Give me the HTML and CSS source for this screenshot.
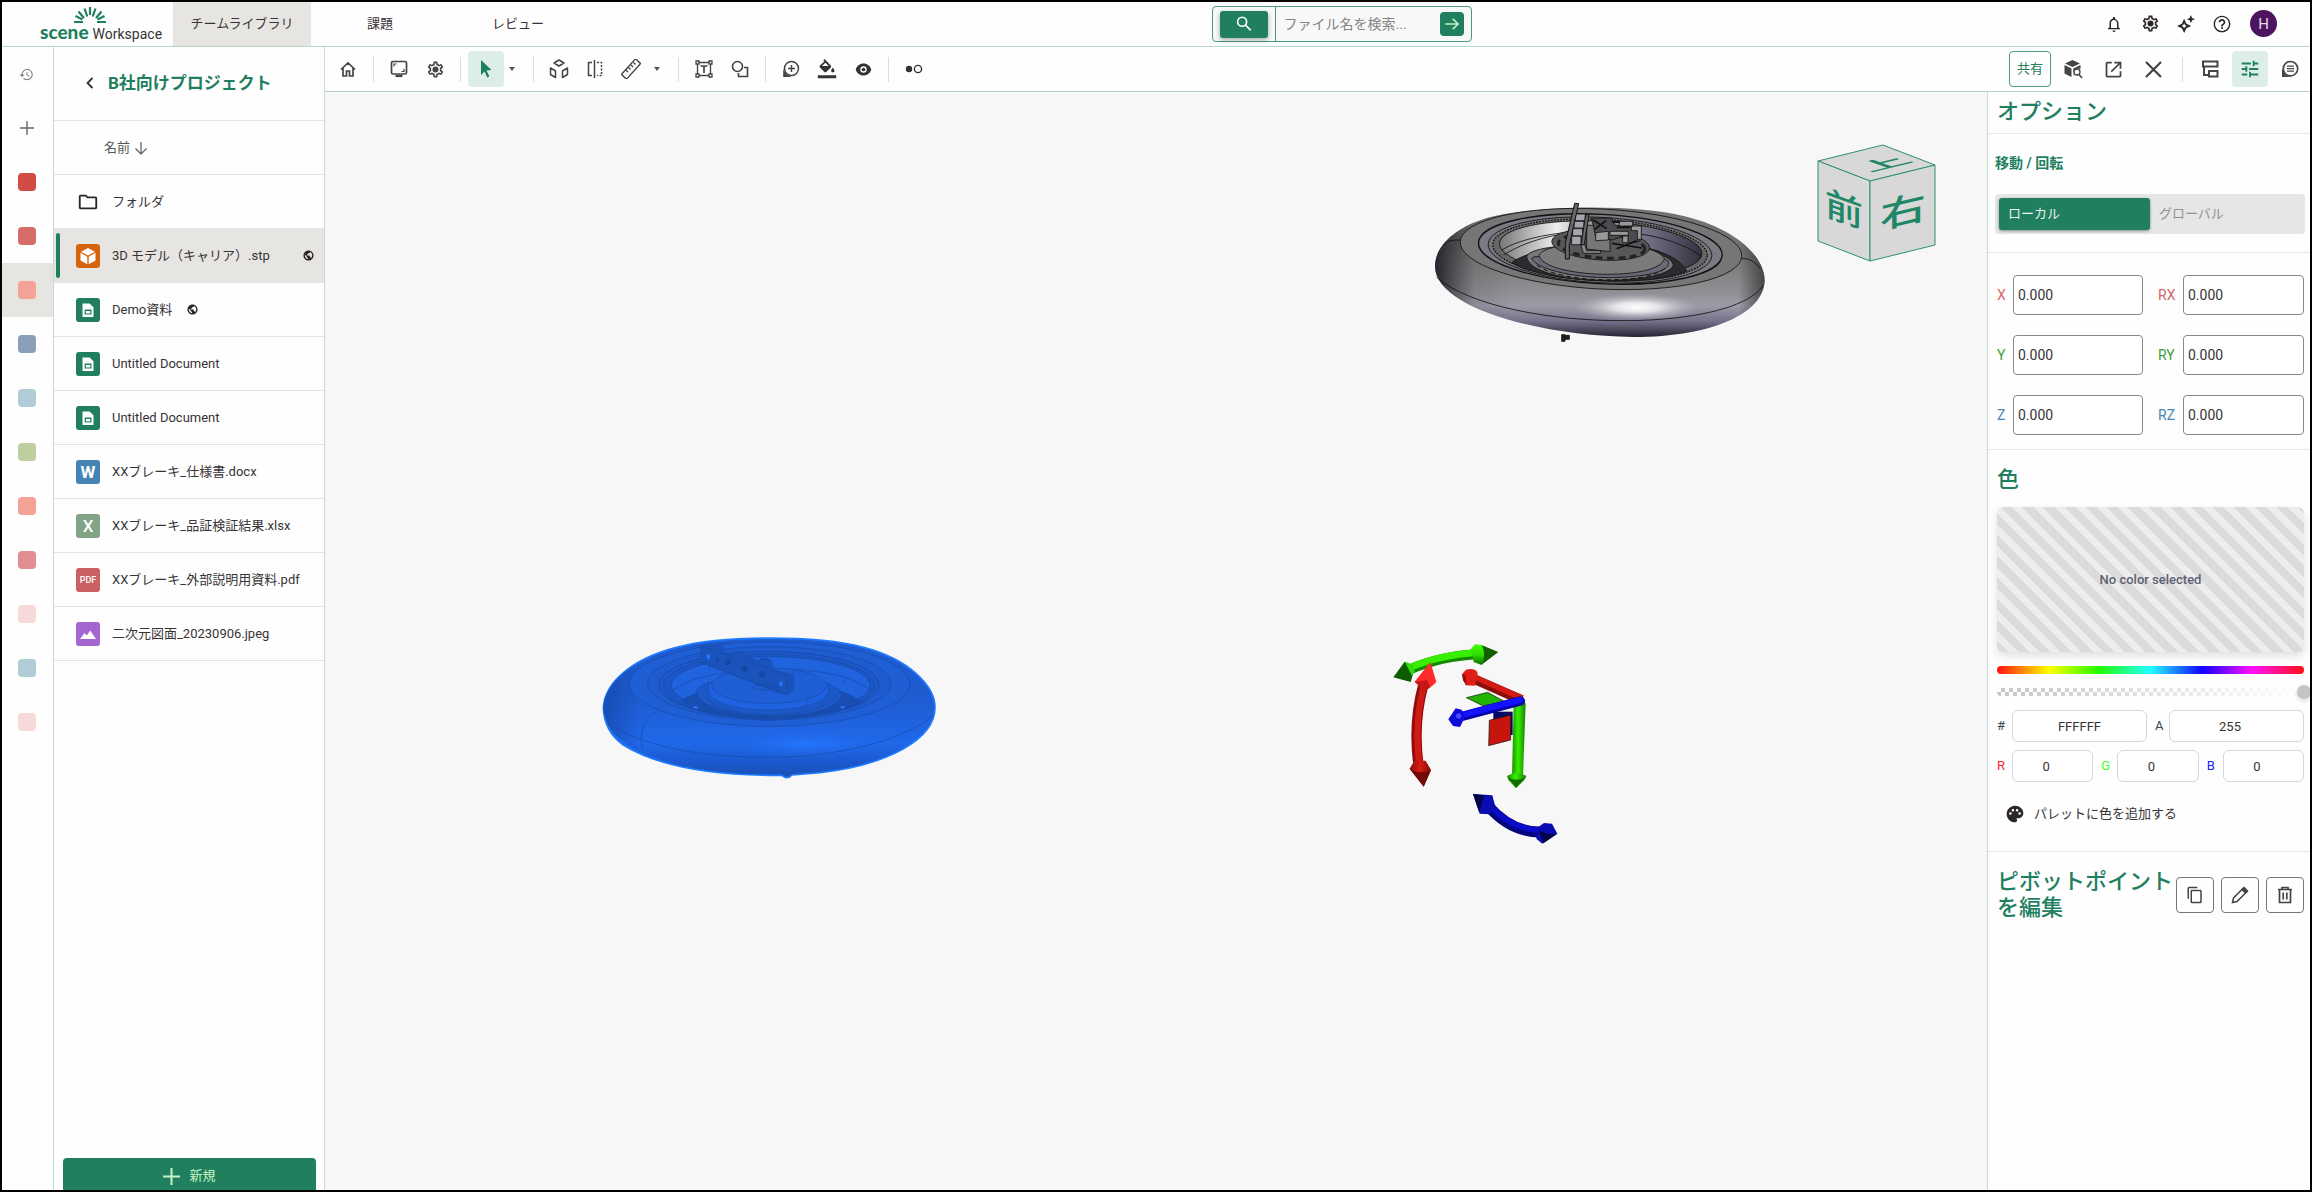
FILE: index.html
```html
<!DOCTYPE html>
<html lang="ja">
<head>
<meta charset="utf-8">
<meta name="viewport" content="width=device-width, initial-scale=1">
<title>scene Workspace</title>
<link rel="stylesheet" href="styles.css">
</head>
<body>
<svg class="defs" aria-hidden="true">
  <symbol id="i-gear" viewBox="0 0 24 24"><path d="M19.43 12.98c.04-.32.07-.64.07-.98s-.03-.66-.07-.98l2.11-1.65c.19-.15.24-.42.12-.64l-2-3.46c-.09-.16-.26-.25-.44-.25-.06 0-.12.01-.17.03l-2.49 1c-.52-.4-1.08-.73-1.69-.98l-.38-2.65C14.46 2.18 14.25 2 14 2h-4c-.25 0-.46.18-.49.42l-.38 2.65c-.61.25-1.17.59-1.69.98l-2.49-1c-.06-.02-.12-.03-.18-.03-.17 0-.34.09-.43.25l-2 3.46c-.13.22-.07.49.12.64l2.11 1.65c-.04.32-.07.65-.07.98s.03.66.07.98l-2.11 1.65c-.19.15-.24.42-.12.64l2 3.46c.09.16.26.25.44.25.06 0 .12-.01.17-.03l2.49-1c.52.4 1.08.73 1.69.98l.38 2.65c.03.24.24.42.49.42h4c.25 0 .46-.18.49-.42l.38-2.65c.61-.25 1.17-.59 1.69-.98l2.49 1c.06.02.12.03.18.03.17 0 .34-.09.43-.25l2-3.46c.12-.22.07-.49-.12-.64l-2.11-1.65zm-1.98-1.71c.04.31.05.52.05.73 0 .21-.02.43-.05.73l-.14 1.13.89.7 1.08.84-.7 1.21-1.27-.51-1.04-.42-.9.68c-.43.32-.84.56-1.25.73l-1.06.43-.16 1.13-.2 1.35h-1.4l-.19-1.35-.16-1.13-1.06-.43c-.43-.18-.83-.41-1.23-.71l-.91-.7-1.06.43-1.27.51-.7-1.21 1.08-.84.89-.7-.14-1.13c-.03-.31-.05-.54-.05-.74s.02-.43.05-.73l.14-1.13-.89-.7-1.08-.84.7-1.21 1.27.51 1.04.42.9-.68c.43-.32.84-.56 1.25-.73l1.06-.43.16-1.13.2-1.35h1.39l.19 1.35.16 1.13 1.06.43c.43.18.83.41 1.23.71l.91.7 1.06-.43 1.27-.51.7 1.21-1.07.85-.89.7.14 1.13z"/><circle cx="12" cy="12" r="3.8"/></symbol>
  <symbol id="i-globe" viewBox="0 0 24 24"><path d="M12 1C5.9 1 1 5.9 1 12s4.900 11 11 11 11-4.900 11-11S18.100 1 12 1zm-1 18.930c-3.950-.49-7-3.850-7-7.930 0-.62.080-1.210.210-1.790L9 15v1c0 1.100.9 2 2 2v1.930zm6.900-2.540c-.26-.81-1-1.390-1.900-1.390h-1v-3c0-.55-.45-1-1-1H8v-2h2c.55 0 1-.45 1-1V7h2c1.100 0 2-.9 2-2v-.41c2.930 1.190 5 4.060 5 7.410 0 2.080-.8 3.970-2.100 5.390z"/></symbol>
  <symbol id="i-sheet" viewBox="0 0 24 24"><path fill="#fff" d="M6.500 5.500h7L17.500 9.200V19h-11z"/><path fill="none" stroke="#1f7f5f" stroke-width="1.200" d="M9.300 12h5.600v4H9.300zM8.700 12.300h6.800"/></symbol>
</svg>

<header class="header">
  <a class="logo" href="#">
    <svg class="logo-sun" viewBox="0 0 32 18" aria-hidden="true"><g stroke="#1f7f5f" stroke-width="2.200" fill="none"><path d="M16 1v8M10.500 2.500l2.800 8M21.500 2.500l-2.800 8M4.500 5.500l5.500 6.500M27.500 5.500L22 12M0 16h9M23 16h9M1.500 10l7 3.500M30.500 10l-7 3.500"/></g></svg>
    <span class="logo-line"><b>scene</b><span>Workspace</span></span>
  </a>
  <nav class="tabs">
    <a class="tab tab-on" href="#">チームライブラリ</a>
    <a class="tab" href="#">課題</a>
    <a class="tab" href="#">レビュー</a>
  </nav>
  <form class="search-wrap">
    <div class="search">
      <div class="search-kind"><button type="button" aria-label="検索"><svg width="18" height="18" viewBox="0 0 24 24" fill="none" stroke="#fff" stroke-width="2.200"><circle cx="9.500" cy="9" r="6"/><path d="M14 13.500l7 7"/></svg></button></div>
      <input type="text" placeholder="ファイル名を検索..." aria-label="ファイル名を検索">
      <button class="search-go" type="button" aria-label="実行"><svg width="18" height="18" viewBox="0 0 24 24" fill="none" stroke="#c6f3c0" stroke-width="2.200"><path d="M3 12h17M13 5l7 7-7 7"/></svg></button>
    </div>
  </form>
  <div class="account">
    <button class="ib" type="button" aria-label="通知"><svg width="18" height="18" viewBox="0 0 24 24" fill="#2b2529"><path d="M12 22.500c1.100 0 2-.9 2-2h-4c0 1.100.9 2 2 2zm6-6v-5c0-3.070-1.630-5.640-4.500-6.320V4c0-.83-.67-1.500-1.500-1.500s-1.500.67-1.500 1.500v.68C7.640 5.360 6 7.920 6 11v5.500l-2 1V19h16v-1.500zM16 17.300H8v-6.300c0-2.480 1.510-4.500 4-4.500s4 2.020 4 4.500z"/></svg></button>
    <button class="ib" type="button" aria-label="設定"><svg width="19" height="19" fill="#2b2529"><use href="#i-gear"/></svg></button>
    <button class="ib" type="button" aria-label="AI"><svg width="18" height="18" viewBox="0 0 24 24" fill="#2b2529"><path fill-rule="evenodd" d="M9.500 5l3 6.500 6.500 3-6.500 3-3 6.500-3-6.500-6.500-3 6.500-3zm0 6l-1.200 2.300-2.300 1.200 2.300 1.200 1.200 2.300 1.200-2.300 2.300-1.200-2.300-1.200zM18.500 0l1.600 3.900L24 5.500l-3.900 1.600L18.500 11l-1.600-3.900L13 5.500l3.900-1.600z"/></svg></button>
    <button class="ib" type="button" aria-label="ヘルプ"><svg width="20" height="20" viewBox="0 0 24 24" fill="#2b2529"><path d="M11 18h2v-2h-2v2zm1-16C6.480 2 2 6.480 2 12s4.480 10 10 10 10-4.480 10-10S17.520 2 12 2zm0 18.300c-4.600 0-8.300-3.700-8.300-8.300s3.700-8.300 8.300-8.300 8.300 3.700 8.300 8.300-3.700 8.300-8.300 8.300zM12 6c-2.210 0-4 1.790-4 4h2c0-1.100.9-2 2-2s2 .9 2 2c0 2-3 1.750-3 5h2c0-2.250 3-2.500 3-5 0-2.210-1.790-4-4-4z"/></svg></button>
    <button class="avatar" type="button">H</button>
  </div>
</header>

<div class="body">
  <nav class="rail" aria-label="プロジェクト">
    <button type="button" aria-label="履歴"><svg width="15" height="15" viewBox="0 0 24 24" fill="#7c7c7c"><path d="M13 3c-4.970 0-9 4.030-9 9H1l3.900 3.900L9 12H5.700c0-4 3.300-7.300 7.300-7.300s7.300 3.300 7.300 7.300-3.300 7.300-7.300 7.300c-2 0-3.800-.8-5.100-2.100l-1.200 1.200C8.270 19.990 10.510 21 13 21c4.970 0 9-4.030 9-9s-4.030-9-9-9zm-1 5v5l4.280 2.540.72-1.210-3.500-2.080V8z"/></svg></button>
    <button type="button" aria-label="追加"><svg width="14" height="14" viewBox="0 0 14 14" stroke="#666" stroke-width="1.400"><path d="M7 0v14M0 7h14"/></svg></button>
    <button type="button" aria-label="プロジェクト 1"><i class="sw red"></i></button>
    <button type="button" aria-label="プロジェクト 2"><i class="sw brick"></i></button>
    <button class="rail-on" type="button" aria-label="プロジェクト 3"><i class="sw salmon"></i></button>
    <button type="button" aria-label="プロジェクト 4"><i class="sw slate"></i></button>
    <button type="button" aria-label="プロジェクト 5"><i class="sw sky"></i></button>
    <button type="button" aria-label="プロジェクト 6"><i class="sw olive"></i></button>
    <button type="button" aria-label="プロジェクト 7"><i class="sw salmon"></i></button>
    <button type="button" aria-label="プロジェクト 8"><i class="sw rose"></i></button>
    <button type="button" aria-label="プロジェクト 9"><i class="sw blush"></i></button>
    <button type="button" aria-label="プロジェクト 10"><i class="sw sky"></i></button>
    <button type="button" aria-label="プロジェクト 11"><i class="sw blush"></i></button>
  </nav>

  <aside class="files">
    <div class="files-head">
      <button type="button" aria-label="戻る"><svg width="8" height="12" viewBox="0 0 8 12" fill="none" stroke="#333" stroke-width="1.800"><path d="M6.500 1L1.500 6l5 5"/></svg></button>
      <h1>B社向けプロジェクト</h1>
    </div>
    <button class="sort" type="button">名前<svg width="14" height="14" viewBox="0 0 14 14" fill="none" stroke="#666" stroke-width="1.300"><path d="M7 1v12M1.500 7.500L7 13l5.500-5.500"/></svg></button>
    <ul>
      <li><a href="#"><span class="tile"><svg width="22" height="22" viewBox="0 0 24 24" fill="#2b2529"><path d="M9.170 6l2 2H20v10H4V6h5.170M10 4H4c-1.100 0-1.990.9-1.990 2L2 18c0 1.100.9 2 2 2h16c1.100 0 2-.9 2-2V8c0-1.100-.9-2-2-2h-8l-2-2z"/></svg></span><span>フォルダ</span></a></li>
      <li class="file-on"><a href="#"><span class="tile t-model"><svg width="18" height="18" viewBox="0 0 18 18" fill="#fff"><path d="M9 1l7 3.700L9 8.600 2 4.700zM1.500 5.800l6.800 3.900v7.500l-6.800-3.700zM16.500 5.800L9.700 9.700v7.500l6.800-3.700z"/></svg></span><span>3D モデル（キャリア）.stp</span><svg class="globe end"><use href="#i-globe"/></svg></a></li>
      <li><a href="#"><span class="tile t-sheet"><svg width="24" height="24"><use href="#i-sheet"/></svg></span><span>Demo資料</span><svg class="globe"><use href="#i-globe"/></svg></a></li>
      <li><a href="#"><span class="tile t-sheet"><svg width="24" height="24"><use href="#i-sheet"/></svg></span><span>Untitled Document</span></a></li>
      <li><a href="#"><span class="tile t-sheet"><svg width="24" height="24"><use href="#i-sheet"/></svg></span><span>Untitled Document</span></a></li>
      <li><a href="#"><span class="tile t-word">W</span><span>XXブレーキ_仕様書.docx</span></a></li>
      <li><a href="#"><span class="tile t-excel">X</span><span>XXブレーキ_品証検証結果.xlsx</span></a></li>
      <li><a href="#"><span class="tile t-pdf">PDF</span><span>XXブレーキ_外部説明用資料.pdf</span></a></li>
      <li><a href="#"><span class="tile t-image"><svg width="24" height="24" viewBox="0 0 24 24" fill="#fff"><path d="M4 17l4.500-6 2.300 2.500L14.200 8.500 20 17z"/></svg></span><span>二次元図面_20230906.jpeg</span></a></li>
    </ul>
    <button class="new" type="button"><svg width="17" height="17" viewBox="0 0 17 17" stroke="#c6f3c0" stroke-width="2"><path d="M8.500 0v17M0 8.500h17"/></svg>新規</button>
  </aside>

  <div class="work">
    <div class="toolbar">
      <div class="tools">
        <button class="ib" type="button" aria-label="ホーム"><svg width="18" height="18" viewBox="0 0 18 18" fill="none" stroke="#444" stroke-width="1.700"><path d="M2 9.500L9 3l7 6.500M4 8v8h3.500v-5h3v5H14V8"/></svg></button>
        <i class="sep"></i>
        <button class="ib" type="button" aria-label="画面"><svg width="18" height="18" viewBox="0 0 18 18" fill="none" stroke="#444" stroke-width="1.700"><rect x="1.500" y="1.500" width="15" height="12.500" rx="1.500"/><path d="M4 6.500V4h2.500M14 9v2.500h-2.500" stroke-width="1.200"/><path d="M5.500 16h7" stroke-width="2.200"/></svg></button>
        <button class="ib" type="button" aria-label="表示設定"><svg width="19" height="19" fill="#444"><use href="#i-gear"/></svg></button>
        <i class="sep"></i>
        <button class="ib ib-on" type="button" aria-label="選択"><svg width="18" height="18" viewBox="0 0 18 18" fill="#1f7f5f"><path d="M4 0l10.500 10-5 .4 2.900 6.100-2.200 1-2.700-6L4 15z"/></svg></button>
        <button class="caret" type="button" aria-label="選択メニュー"><svg width="6" height="4" viewBox="0 0 6 4" fill="#555"><path d="M0 0h6L3 4z"/></svg></button>
        <i class="sep"></i>
        <button class="ib" type="button" aria-label="分解"><svg width="20" height="20" viewBox="0 0 20 20" fill="none" stroke="#444" stroke-width="1.500" stroke-linejoin="round"><path d="M10 1l5 3-5 3-5-3zM1.500 9l5 3v6.500l-5-3zM18.500 9l-5 3v6.500l5-3z"/></svg></button>
        <button class="ib" type="button" aria-label="断面"><svg width="18" height="18" viewBox="0 0 18 18" fill="none" stroke="#444" stroke-width="1.500"><path d="M6 2.500H2.500v13H6M8.500 0v18"/><path stroke-dasharray="2 1.500" d="M11 2.500h4.500v13H11"/></svg></button>
        <button class="ib" type="button" aria-label="計測"><svg width="20" height="20" viewBox="0 0 20 20" fill="none" stroke="#444" stroke-width="1.400"><rect x="-.5" y="6.500" width="21" height="7" rx="1" transform="rotate(-48 10 10)"/><path d="M5 11l2 2M7.500 8.500l2 2M10 6l2 2M12.500 3.500l2 2"/></svg></button>
        <button class="caret" type="button" aria-label="計測メニュー"><svg width="6" height="4" viewBox="0 0 6 4" fill="#555"><path d="M0 0h6L3 4z"/></svg></button>
        <i class="sep"></i>
        <button class="ib" type="button" aria-label="テキスト"><svg width="18" height="18" viewBox="0 0 18 18" fill="#fff" stroke="#444" stroke-width="1.300"><path d="M2.500 2.500h13v13h-13z"/><path d="M1 1h3v3H1zM14 1h3v3h-3zM1 14h3v3H1zM14 14h3v3h-3z"/><path d="M5.500 6h7M9 6v7" stroke-width="1.700"/></svg></button>
        <button class="ib" type="button" aria-label="図形"><svg width="18" height="18" viewBox="0 0 18 18" fill="none" stroke="#444" stroke-width="1.600"><circle cx="6.500" cy="6.500" r="5"/><path d="M13 7.500h3.500v9h-9V13"/></svg></button>
        <i class="sep"></i>
        <button class="ib" type="button" aria-label="コメント追加"><svg width="18" height="18" viewBox="0 0 18 18" fill="none" stroke="#444" stroke-width="1.500"><circle cx="9.500" cy="8.500" r="7"/><path d="M9.500 5v7M6 8.500h7"/><path fill="#444" stroke="none" d="M1.200 9l3.300 5.500 5 2.500H1.200z"/></svg></button>
        <button class="ib" type="button" aria-label="塗りつぶし"><svg width="20" height="22" viewBox="0 0 24 26" fill="#333"><path d="M16.560 8.940L9 1 7.500 2.400l1.400 1.500-5.460 5.040c-.59.59-.59 1.540 0 2.120l5.500 5.500c.29.29.68.44 1.060.44s.77-.15 1.060-.44l5.500-5.500c.59-.58.59-1.530 0-2.120zM6 9.500L10 5.600 14 9.500zM19 11.500s-2 2.170-2 3.500c0 1.100.9 2 2 2s2-.9 2-2c0-1.330-2-3.500-2-3.500zM1 20.500h22v3.500H1z"/></svg></button>
        <button class="ib" type="button" aria-label="表示"><svg width="17" height="17" viewBox="0 0 24 24" fill="#333"><path fill-rule="evenodd" d="M12 3.500C6.500 3.500 2.500 7 1 12c1.500 5 5.500 8.500 11 8.500s9.500-3.500 11-8.500c-1.500-5-5.500-8.500-11-8.500zm0 13a4.500 4.500 0 1 1 0-9 4.500 4.500 0 0 1 0 9z"/><circle cx="12" cy="12" r="2.600"/></svg></button>
        <i class="sep"></i>
        <button class="ib" type="button" aria-label="比較"><svg width="18" height="18" viewBox="0 0 18 18" fill="#333"><circle cx="4" cy="9" r="3.200"/><circle cx="13" cy="9" r="3.600" fill="none" stroke="#333" stroke-width="1.400"/></svg></button>
      </div>
      <div class="tools-right">
        <button class="share" type="button">共有</button>
        <button class="ib" type="button" aria-label="モデル検索"><svg width="20" height="20" viewBox="0 0 20 20"><path fill="#444" d="M9.500 1L17 4.500 9.500 8 2 4.500zM1.500 6l7 3.400v8.600l-7-3.500zM17.500 6v4a5 5 0 0 0-6.700 6.300l-.5.700V9.400z"/><circle cx="14" cy="13" r="3" fill="#fff" stroke="#444" stroke-width="1.300"/><path stroke="#444" stroke-width="1.600" d="M16 15.500l3 3.500"/></svg></button>
        <button class="ib" type="button" aria-label="別ウィンドウ"><svg width="21" height="21" viewBox="0 0 24 24" fill="#444"><path d="M19 19H5V5h5V3H5c-1.110 0-2 .9-2 2v14c0 1.100.890 2 2 2h14c1.100 0 2-.9 2-2v-5h-2v5zM13 3v2h4.590l-8.830 8.830 1.410 1.410L19 6.410V11h2V3h-8z"/></svg></button>
        <button class="ib" type="button" aria-label="閉じる"><svg width="17" height="17" viewBox="0 0 17 17" stroke="#444" stroke-width="2.200"><path d="M1 1l15 15M16 1L1 16"/></svg></button>
        <i class="sep"></i>
        <button class="ib" type="button" aria-label="ツリー"><svg width="18" height="18" viewBox="0 0 18 18" fill="none" stroke="#444" stroke-width="2"><path d="M2 1.500h14.500v5H2zM3 6.500v8.500h4.500M8 11h8.500v5.500H8z"/></svg></button>
        <button class="ib ib-on" type="button" aria-label="オプション"><svg width="22" height="22" viewBox="0 0 24 24" fill="#1f7f5f"><path d="M3 17v2h6v-2H3zM3 5v2h10V5H3zm10 16v-2h8v-2h-8v-2h-2v6h2zM7 9v2H3v2h4v2h2V9H7zm14 4v-2H11v2h10zm-6-4h2V7h4V5h-4V3h-2v6z"/></svg></button>
        <button class="ib" type="button" aria-label="コメント"><svg width="18" height="18" viewBox="0 0 18 18" fill="none" stroke="#444" stroke-width="1.600"><circle cx="9.500" cy="8.700" r="7.200"/><path stroke-width="1.300" d="M6 6.200h7M6 8.700h7M6 11.200h7"/><path fill="#444" stroke="none" d="M1 8l3 6.500 5.500 2.500H1z"/></svg></button>
      </div>
    </div>

    <div class="stage">
      <main class="canvas">
        <svg class="obj wheel" viewBox="0 0 1080 480" role="img" aria-label="3D モデル">
          <defs>
            <linearGradient id="g1" x1="0" y1="0" x2="0" y2="1"><stop offset=".3" stop-color="#727273"/><stop offset=".6" stop-color="#8b8a8d"/><stop offset=".76" stop-color="#9c9aa8"/><stop offset=".88" stop-color="#74728a"/><stop offset="1" stop-color="#262431"/></linearGradient>
            <linearGradient id="g2" x1="0" y1="0" x2="1" y2="0"><stop offset="0" stop-color="#15131f" stop-opacity=".85"/><stop offset=".12" stop-color="#222" stop-opacity=".12"/><stop offset=".25" stop-color="#222" stop-opacity="0"/><stop offset=".92" stop-color="#222" stop-opacity="0"/><stop offset="1" stop-color="#222" stop-opacity=".65"/></linearGradient>
            <radialGradient id="g3"><stop offset="0" stop-color="#fff"/><stop offset=".35" stop-color="#fff" stop-opacity=".75"/><stop offset="1" stop-color="#bbb" stop-opacity="0"/></radialGradient>
            <linearGradient id="g4" x1="0" y1="0" x2="1" y2="0"><stop offset="0" stop-color="#777"/><stop offset=".28" stop-color="#efefef"/><stop offset=".45" stop-color="#999"/><stop offset=".75" stop-color="#6d6b80"/><stop offset="1" stop-color="#33313f"/></linearGradient>
          </defs>
          <path fill="url(#g1)" d="M45 228C46 170 100 115 200 84 330 47 640 38 800 80 950 118 1034 200 1034 272 1030 370 880 440 640 441 350 438 44 350 45 228z"/>
          <path fill="url(#g2)" d="M45 228C46 170 100 115 200 84 330 47 640 38 800 80 950 118 1034 200 1034 272 1030 370 880 440 640 441 350 438 44 350 45 228z"/>
          <ellipse cx="650" cy="352" rx="190" ry="42" fill="url(#g3)"/>
          <g stroke="#111" stroke-width="2.500" fill="none">
            <path d="M50 262C150 350 400 394 620 392 830 390 990 350 1030 285M72 165Q80 148 122 150M965 205Q1000 205 1020 235"/>
            <ellipse cx="543" cy="177" rx="423" ry="120" fill="#767676" transform="rotate(3 543 177)"/>
            <ellipse cx="541" cy="177" rx="366" ry="104" fill="#7b7a82" stroke-width="4" transform="rotate(3 541 177)"/>
            <ellipse cx="540" cy="180" rx="336" ry="98" fill="#75757c" transform="rotate(3 540 180)"/>
            <ellipse cx="540" cy="180" rx="322" ry="92" fill="#666" stroke-width="4" stroke-dasharray="5 4" transform="rotate(3 540 180)"/>
            <ellipse cx="542" cy="176" rx="304" ry="82" fill="url(#g4)" transform="rotate(3 542 176)"/>
            <path fill="#2c2c30" d="M275 218C320 180 500 150 600 160S780 200 800 244C700 290 380 282 275 218z"/>
            <path d="M245 180C360 110 700 90 845 200M250 195C340 140 440 128 480 128"/>
            <path fill="#777" d="M320 200C330 150 740 150 760 225 740 290 330 290 320 200z"/>
            <path fill="#6a6977" d="M335 205C350 240 480 268 600 262S750 235 745 215L725 200H345z"/>
            <path fill="#7b7b7b" d="M357 196C380 145 700 145 733 205 720 275 370 265 357 196z"/>
            <path d="M350 225C420 280 680 285 735 235" stroke-width="3" stroke-dasharray="14 10"/>
            <ellipse cx="542" cy="164" rx="147" ry="46" fill="#58585b" transform="rotate(4 542 164)"/>
            <ellipse cx="545" cy="168" rx="130" ry="36" stroke-width="9" stroke="#222" stroke-dasharray="20 14" transform="rotate(4 545 168)"/>
            <path fill="#777" d="M500 105l70 5v75l-70-8z"/>
            <path fill="#4b4b50" d="M515 84h60l10 22 76 6v40l-30 8-22-22-32 12-50-8z"/>
            <path fill="#999" d="M527 128l38-4v26l-38 2zM570 124h55v12h-55zM608 138h16v20h-16zM634 108h30v40h-12v-26h-18zM598 94h40v14h-40z"/>
            <path fill="#888" d="M490 146l10 36h42v8h-52l-12-42z"/>
            <path fill="#a5a5ae" d="M466 72h30v22h-30zM462 92h30v24h-30zM458 114h30v24h-30zM455 138h28v26h-28z"/>
            <path fill="#666" d="M497 74h10l-14 90h-10zM464 40l12 1-28 124v42h-12v-47z" stroke-width="3"/>
            <path stroke-width="5" d="M520 90l40 26M524 118l34-26M575 95h25M590 112h40M576 160l90 14M590 176l60-24"/>
            <path fill="#222" d="M425 434h10v20h-10zM436 436h12v12h-12z"/>
          </g>
        </svg>

        <svg class="obj wheel-blue" viewBox="0 0 1080 510" role="img" aria-label="選択中のモデル">
          <defs>
            <linearGradient id="b1" x1="0" y1="0" x2="0" y2="1"><stop offset=".4" stop-color="#1e5bcf"/><stop offset=".75" stop-color="#2068ea"/><stop offset=".88" stop-color="#1b5ad0"/><stop offset="1" stop-color="#1a4fb4"/></linearGradient>
            <linearGradient id="b2" x1="0" y1="0" x2="1" y2="0"><stop offset="0" stop-color="#154aad" stop-opacity=".8"/><stop offset=".25" stop-color="#154aad" stop-opacity="0"/></linearGradient>
            <radialGradient id="b3"><stop offset="0" stop-color="#2575ff"/><stop offset="1" stop-color="#2068ea" stop-opacity="0"/></radialGradient>
          </defs>
          <path fill="url(#b1)" stroke="#1f7bff" stroke-width="5" d="M40 262C45 185 130 115 260 82 400 45 680 45 820 82 960 118 1035 200 1035 262 1035 360 890 435 690 458L606 465Q592 480 576 466 250 468 100 375 42 335 40 262z"/>
          <path fill="url(#b2)" d="M40 262C45 185 130 115 260 82L500 450C250 460 42 385 40 262z"/>
          <ellipse cx="650" cy="372" rx="230" ry="42" fill="url(#b3)"/>
          <g fill="none" stroke="#164aa6" stroke-width="2">
            <path d="M55 312C180 390 360 412 540 412S930 370 1032 285M205 270C155 300 145 350 160 390"/>
            <ellipse cx="539" cy="192" rx="421" ry="127" fill="#1f5fd6"/>
            <ellipse cx="538" cy="190" rx="365" ry="110" fill="#1e5bcf"/>
            <ellipse cx="537" cy="195" rx="330" ry="100" stroke-width="3"/>
            <ellipse cx="537" cy="198" rx="318" ry="96" fill="#1c56c5"/>
            <ellipse cx="542" cy="196" rx="298" ry="86" fill="#2063df"/>
            <path fill="#184eb2" d="M275 242C340 190 700 150 812 246 720 310 360 310 275 242z"/>
            <path d="M245 215C330 130 740 120 840 210M360 150l-4-22M755 195l10-18"/>
            <path fill="#1c58c8" d="M318 215C340 150 740 150 755 225 750 310 330 310 318 215z"/>
            <path fill="#1f62e0" d="M355 190v28c30 70 330 70 360 0v-28z"/>
            <ellipse cx="537" cy="197" rx="172" ry="53" fill="#1f5fd6"/>
            <path d="M350 232c40 70 340 70 380 0M335 240c40 80 370 80 410 0M650 240v25"/>
            <path fill="#1a53bb" stroke="#1a53bb" d="M385 72h14v24l26 10q25-20 48 8 20-4 30 14 10-24 40-8l8 30 60 12v50l-20 12-30-6L330 126V76z"/>
            <path d="M330 78l260 86v60M330 126l256 96M425 104q25-20 48 8M500 126q30-20 48 6"/>
            <ellipse cx="525" cy="202" rx="38" ry="8"/>
          </g>
          <g fill="#1548a6"><circle cx="413" cy="126" r="10"/><circle cx="464" cy="146" r="10"/><circle cx="516" cy="163" r="10"/><circle cx="382" cy="121" r="5"/></g>
          <g fill="#2575ff"><ellipse cx="355" cy="110" rx="5" ry="9"/><ellipse cx="573" cy="191" rx="5" ry="8"/><path d="M308 262l8-5 10 4-8 6zM750 262l8-5 8 4-8 5z"/></g>
        </svg>

        <svg class="obj gizmo" viewBox="0 0 570 690" role="img" aria-label="移動・回転ハンドル">
          <defs>
            <linearGradient id="zg" x1="0" y1="0" x2="0" y2="1"><stop offset="0" stop-color="#43ff05"/><stop offset=".5" stop-color="#2fdc00"/><stop offset="1" stop-color="#0c6b00"/></linearGradient>
            <linearGradient id="zv" x1="0" y1="0" x2="1" y2="0"><stop offset="0" stop-color="#1b9000"/><stop offset=".45" stop-color="#35f000"/><stop offset="1" stop-color="#178000"/></linearGradient>
            <linearGradient id="zr" x1="0" y1="0" x2="1" y2="0"><stop offset="0" stop-color="#8c0f0a"/><stop offset=".5" stop-color="#d81c16"/><stop offset="1" stop-color="#7d0e09"/></linearGradient>
          </defs>
          <path d="M85 120Q180 78 300 72" fill="none" stroke="#148800" stroke-width="30"/>
          <path d="M85 115Q180 73 300 67" fill="none" stroke="#36ef02" stroke-width="20"/>
          <path fill="#0d5c00" d="M40 142L74 95l24 12 2 22-8 27z"/><path fill="#33dd05" d="M74 95q25 2 30 30l-8 12z"/>
          <path fill="url(#zg)" d="M273 56l12-13 22 2 14 20-16 40-24-9z"/><path fill="#106000" d="M306 46l49 20-50 38q14-30 1-58z"/>
          <path d="M130 165Q98 280 116 410" fill="none" stroke="#8c0f0a" stroke-width="31"/><path d="M132 165Q101 280 119 410" fill="none" stroke="#d11a14" stroke-width="19"/>
          <path fill="#ff2a2a" d="M151 96l18 60q-20 22-38 24l-27-25z"/><path fill="#c51714" d="M104 155l27 25q15-2 20-10l-10-20z"/>
          <path fill="url(#zr)" d="M103 392h34l16 28-22 50-42-54z"/><path fill="#720a06" d="M89 416q30 20 64 4l-22 50z"/>
          <path fill="#22b400" stroke="#111" stroke-width="2" d="M259 203l64-16 55 30-70 10z"/>
          <path fill="#070a66" d="M340 245h58v70h-58z"/>
          <path fill="#c5150d" stroke="#111" stroke-width="2" d="M328 271l64-16v75l-66 17z"/>
          <path fill="url(#zv)" d="M401 220q18-14 36 0l-8 218h-33z"/><path fill="url(#zv)" d="M381 438q28-18 58 0l-6 12-25 25-23-25z"/><path fill="#146c00" d="M383 442q28 16 56-2l-31 34z"/>
          <path d="M278 145L425 210" stroke="#8a0e09" stroke-width="29"/><path d="M280 140L427 205" stroke="#d51b13" stroke-width="16"/>
          <path fill="#e01e17" d="M246 133l12-14q28-6 35 10l-8 38-28-1z"/><path fill="#950f0a" d="M246 133l10 2 4 32-11-16z"/>
          <path d="M236 262L421 213" stroke="#0505a8" stroke-width="28" stroke-linecap="round"/><path d="M240 257L420 210" stroke="#1412ff" stroke-width="18" stroke-linecap="round"/>
          <path fill="#0c0bdc" d="M205 268l22-33 18 4 10 22-15 30-21-3z"/><circle cx="236" cy="258" r="8" fill="#4a4aff"/>
          <path d="M322 525Q390 605 478 606" fill="none" stroke="#04047c" stroke-width="33"/><path d="M325 522Q392 598 478 600" fill="none" stroke="#0b0bcc" stroke-width="17"/>
          <path fill="#0b0bb4" d="M279 492l58 4 8 30-16 27-30-2z"/><path fill="#040448" d="M279 492l34 4-16 50z"/>
          <path fill="#0b0bb4" d="M474 592l18-13 24 2 16 30-45 30-18-15z"/><path fill="#040448" d="M477 600q20 16 55 11l-42 29z"/>
        </svg>

        <svg class="obj view-cube" viewBox="0 0 200 160" role="img" aria-label="ビューキューブ">
          <g fill="#d8d8d8" stroke="#2d9071" stroke-width="1" stroke-linejoin="round"><path d="M38 41L103 25l52 20-65 16z"/><path d="M38 41l52 20v80l-52-20z"/><path d="M90 61l65-16v80l-65 16z"/></g>
          <g class="cube-text"><text transform="matrix(1 .36 0 .9 64 89)" font-size="38" x="-19" y="14">前</text><text transform="matrix(1 -.24 0 .75 123 91)" font-size="46" x="-23" y="17">右</text><text transform="matrix(1.200 -.29 .64 .22 103 44)" font-size="38" x="-19" y="14">上</text></g>
        </svg>
      </main>

      <aside class="options">
        <h2 class="opt-title">オプション</h2>
        <section class="move">
          <h3>移動 / 回転</h3>
          <div class="seg"><button class="seg-on" type="button">ローカル</button><button type="button">グローバル</button></div>
        </section>
        <section class="axes">
          <label class="cx" for="x">X</label><input id="x" value="0.000"><label class="cx" for="rx">RX</label><input id="rx" value="0.000">
          <label class="cy" for="y">Y</label><input id="y" value="0.000"><label class="cy" for="ry">RY</label><input id="ry" value="0.000">
          <label class="cz" for="z">Z</label><input id="z" value="0.000"><label class="cz" for="rz">RZ</label><input id="rz" value="0.000">
        </section>
        <section class="color">
          <h2>色</h2>
          <div class="no-color">No color selected</div>
          <div class="slider hue"><input type="range" aria-label="色相" value="0"></div>
          <div class="slider alpha"><input type="range" aria-label="不透明度" value="100"></div>
          <div class="hexrow"><label for="hex">#</label><input id="hex" value="FFFFFF"><label for="a">A</label><input class="num" id="a" value="255"></div>
          <div class="rgbrow"><label class="r" for="r">R</label><input class="num" id="r" value="0"><label class="g" for="g">G</label><input class="num" id="g" value="0"><label class="b" for="b">B</label><input class="num" id="b" value="0"></div>
          <button class="palette" type="button"><svg width="20" height="20" viewBox="0 0 24 24" fill="#2b2529"><path d="M12 2C6.490 2 2 6.490 2 12s4.490 10 10 10c1.380 0 2.500-1.120 2.500-2.500 0-.61-.23-1.200-.64-1.670-.08-.1-.13-.21-.13-.33 0-.28.220-.5.500-.5H16c3.310 0 6-2.690 6-6 0-4.960-4.490-9-10-9zm5.500 11c-.83 0-1.500-.67-1.500-1.500s.67-1.500 1.500-1.500 1.500.67 1.500 1.500-.67 1.500-1.500 1.500zm-3-4c-.83 0-1.500-.67-1.500-1.500S13.670 6 14.500 6s1.500.67 1.500 1.500S15.330 9 14.500 9zM5 11.500c0-.83.67-1.500 1.500-1.500s1.500.67 1.500 1.500S7.330 13 6.500 13 5 12.330 5 11.500zm6-4c0 .83-.67 1.500-1.500 1.500S8 8.330 8 7.500 8.670 6 9.500 6s1.500.67 1.500 1.500z"/></svg>パレットに色を追加する</button>
        </section>
        <section class="pivot">
          <h2>ピボットポイントを編集</h2>
          <div class="pivot-btns">
            <button type="button" aria-label="コピー"><svg width="18" height="18" viewBox="0 0 24 24" fill="#444"><path d="M15 1H4c-1.100 0-2 .9-2 2v14h2V3h11V1zm4 4H8c-1.100 0-2 .9-2 2v14c0 1.100.9 2 2 2h11c1.100 0 2-.9 2-2V7c0-1.100-.9-2-2-2zm0 16H8V7h11v14z"/></svg></button>
            <button type="button" aria-label="編集"><svg width="18" height="18" viewBox="0 0 18 18" fill="none" stroke="#444" stroke-width="1.500"><path d="M1.500 16.500l1-4.500L12.500 2l3.500 3.500-10 10z"/><path fill="#444" d="M11 3.500L13 1.500l3.500 3.500-2 2z"/></svg></button>
            <button type="button" aria-label="削除"><svg width="18" height="18" viewBox="0 0 18 18" fill="none" stroke="#444" stroke-width="1.700"><path d="M2 3.500h14M6 3V1.500h6V3M3.500 4v12.500h11V4M7.200 6.500v7M10.800 6.500v7"/></svg></button>
          </div>
        </section>
      </aside>
    </div>
  </div>
</div>
</body>
</html>
```
FILE: styles.css
```css
* { box-sizing: border-box; }

body {
  margin: 0;
  height: 100vh;
  display: flex;
  flex-direction: column;
  border: 2px solid #000;
  overflow: hidden;
  background: #fefefe;
  color: #383336;
  font: 13px/20px Roboto, "Noto Sans CJK JP", sans-serif;
}

button, input { font: inherit; color: inherit; }
button { padding: 0; border: 0; background: none; cursor: pointer; }
a { color: inherit; text-decoration: none; }
h1, h2, h3, ul { margin: 0; padding: 0; }
svg { display: block; flex: none; }
.defs { position: absolute; width: 0; height: 0; }

/* header */
.header { display: flex; flex: none; height: 45px; border-bottom: 1px solid #b9d5cb; }
.logo { width: 171px; padding: 4px 0 0 38px; display: flex; flex-direction: column; }
.logo-sun { width: 32px; height: 18px; margin-left: 34px; }
.logo-line { display: flex; align-items: baseline; gap: 4px; height: 16px; line-height: 16px; font-size: 14px; white-space: nowrap; }
.logo-line b { color: #1f7f5f; font: 900 19px/16px Lato, sans-serif; }
.tabs { display: flex; }
.tab { width: 138px; display: flex; align-items: center; justify-content: center; padding-bottom: 1px; }
.tab-on { background: #e6e5e1; }
.search-wrap { flex: 1; display: flex; align-items: center; justify-content: center; padding-bottom: 1px; }
.search { width: 260px; height: 36px; display: flex; align-items: center; border: 1px solid #4b9a80; border-radius: 4px; background: #f8f8f8; padding-right: 7px; }
.search-kind { height: 100%; padding: 4px 7px; border-right: 1px solid #4b9a80; }
.search-kind button { width: 48px; height: 27px; display: flex; align-items: center; justify-content: center; border-radius: 3px; background: #1f7f5f; box-shadow: 0 2px 5px rgba(0, 0, 0, .3); }
.search input { flex: 1; min-width: 0; padding: 0 8px; border: 0; background: none; font-size: 14px; outline: 0; }
.search input::placeholder { color: #858585; opacity: 1; }
.search-go { width: 24px; height: 24px; display: flex; align-items: center; justify-content: center; border-radius: 4px; background: #1f7f5f; }
.account { display: flex; align-items: center; padding-right: 33px; padding-bottom: 1px; }
.avatar { width: 27px; height: 27px; margin-left: 10px; border-radius: 50%; background: #4d1460; color: #e8dcec; font-size: 15px; }

.ib { width: 36px; height: 36px; flex: none; display: flex; align-items: center; justify-content: center; border-radius: 4px; }
.ib-on { background: #ddeee8; }

.body { flex: 1; min-height: 0; display: flex; }

/* project rail */
.rail { width: 52px; flex: none; border-right: 1px solid #c5dcd4; }
.rail button { width: 100%; height: 54px; display: flex; align-items: center; justify-content: center; padding-right: 2px; }
.rail-on { background: #e6e5e1; }
.sw { width: 18px; height: 18px; border-radius: 4px; }
.red { background: #d24b44; }
.brick { background: #d66d69; }
.salmon { background: #f4a296; }
.slate { background: #899fb9; }
.sky { background: #b0ccd7; }
.olive { background: #bfce9e; }
.rose { background: #e18e93; }
.blush { background: #f7dad8; }

/* file list */
.files { width: 271px; flex: none; display: flex; flex-direction: column; border-right: 1px solid #c5dcd4; }
.files-head { height: 74px; display: flex; align-items: center; gap: 14px; padding: 0 0 2px 32px; border-bottom: 1px solid #e4e4e4; }
.files-head h1 { color: #1f7f5f; font-size: 17px; font-weight: 700; line-height: 24px; }
.sort { height: 54px; display: flex; align-items: center; gap: 4px; padding-left: 50px; border-bottom: 1px solid #e4e4e4; color: #555; }
.files ul { list-style: none; }
.files li { border-bottom: 1px solid #e4e4e4; height: 54px; }
.files li a { height: 100%; display: flex; align-items: center; padding: 0 10px 0 22px; white-space: nowrap; }
.file-on { position: relative; background: #e6e5e1; }
.file-on::before { content: ""; position: absolute; left: 2px; top: 4px; width: 4px; height: 45px; border-radius: 2px; background: #1f7f5f; }
.tile { width: 24px; height: 24px; flex: none; display: flex; align-items: center; justify-content: center; margin-right: 12px; border-radius: 3px; color: #fff; font-weight: 700; font-size: 17px; }
.t-model { background: #d6640e; }
.t-sheet { background: #1f7f5f; }
.t-word { background: #4584b0; }
.t-excel { background: #81a386; font-weight: 500; }
.t-pdf { background: #ca605f; font-size: 9px; font-weight: 500; }
.t-image { background: #a565d1; }
.globe { width: 11px; height: 11px; margin-left: 15px; fill: #2b2529; }
.globe.end { margin-left: auto; }
.new { height: 32px; display: flex; align-items: center; justify-content: center; gap: 9px; margin: auto 8px 0 9px; padding-top: 4px; border-radius: 4px 4px 0 0; background: #1f7f5f; color: #c6f3c0; }

/* toolbar */
.work { flex: 1; min-width: 0; display: flex; flex-direction: column; }
.toolbar { flex: none; height: 45px; display: flex; align-items: center; justify-content: space-between; padding: 0 2px 0 5px; border-bottom: 1px solid #b4cfc4; }
.tools, .tools-right { display: flex; align-items: center; }
.tools-right { gap: 4px; }
.sep { width: 1px; height: 25px; margin: 0 7px; background: #dcdcdc; }
.tools-right .sep { margin: 0 5px 0 7px; }
.caret { width: 22px; height: 36px; display: flex; align-items: center; padding-left: 5px; }
.share { width: 42px; height: 36px; border: 1px solid #4b9a80; border-radius: 4px; color: #1f7f5f; }

.stage { flex: 1; min-height: 0; display: flex; }

/* 3D view */
.canvas { flex: 1; position: relative; overflow: hidden; background: #f7f7f7; }
.obj { position: absolute; }
.wheel { left: 1095px; top: 98px; width: 360px; height: 160px; }
.wheel-blue { left: 265px; top: 528px; width: 360px; height: 170px; }
.gizmo { left: 1055px; top: 538px; width: 190px; height: 230px; }
.view-cube { right: 7px; top: 28px; width: 200px; height: 160px; }
.cube-text { fill: #1f8767; font-family: "Noto Sans CJK JP", sans-serif; font-weight: 500; }

/* options panel */
.options { width: 323px; flex: none; overflow: hidden; border-left: 1px solid #c5dcd4; }
.options h2 { color: #1f7f5f; font-size: 22px; font-weight: 500; line-height: 26px; }
.options section { padding: 0 6px 0 9px; border-bottom: 1px solid #e8e8e8; }
.options .opt-title { height: 42px; padding: 7px 9px; border-bottom: 1px solid #e8e8e8; }
.options .move { padding: 18px 5px 18px 7px; }
.move h3 { margin-bottom: 20px; color: #1f7f5f; font-size: 14px; font-weight: 700; line-height: 22px; }
.seg { height: 40px; display: grid; grid-template-columns: 1fr 1fr; padding: 4px; border-radius: 4px; background: #e6e6e6; }
.seg button { padding-left: 9px; border-radius: 3px; text-align: left; color: #929292; }
.seg .seg-on { background: #1f7f5f; color: #e8f4ef; box-shadow: 0 1px 3px rgba(0, 0, 0, .4); }
.options .axes { display: grid; grid-template-columns: 16px 130fr 40px 121fr; row-gap: 20px; align-items: center; padding-top: 22px; padding-bottom: 14px; font-size: 14px; }
.axes input { min-width: 0; width: 100%; height: 40px; padding: 0 4px; border: 1px solid #8b8789; border-radius: 4px; background: #fff; }
.axes label:nth-of-type(even) { padding-left: 15px; }
.cx { color: #d96565; }
.cy { color: #3f9b3c; }
.cz { color: #4688b8; }

.options .color { padding-top: 17px; padding-bottom: 19px; }
.no-color { height: 145px; margin-top: 14px; display: flex; align-items: center; justify-content: center; border-radius: 6px; background: repeating-linear-gradient(45deg, #dbdbdb 0 8px, #ededed 8px 15px); box-shadow: 0 4px 8px rgba(0, 0, 0, .12); color: #5d6273; font-weight: 500; }
.slider { position: relative; height: 8px; margin-top: 14px; border-radius: 4px; }
.hue { background: linear-gradient(90deg, #f11, #ff0 17%, #2f0 33%, #2ff 50%, #10f 67%, #f1f 83%, #f11); }
.alpha { background: linear-gradient(90deg, transparent, #fefefe), conic-gradient(#c6c6c6 25%, #fefefe 0 50%, #c6c6c6 0 75%, #fefefe 0) 0 0 / 8px 8px; }
.slider input { position: absolute; left: -7px; top: -4px; width: calc(100% + 14px); height: 16px; margin: 0; appearance: none; background: none; }
.slider input::-webkit-slider-thumb { appearance: none; width: 14px; height: 14px; border-radius: 50%; background: #c4c4c4; box-shadow: 0 2px 4px rgba(0, 0, 0, .15); }
.hue input::-webkit-slider-thumb { background: transparent; box-shadow: none; }
.hexrow, .rgbrow { display: grid; align-items: center; color: #3b4252; }
.hexrow { grid-template-columns: 15px 1fr 22px 1fr; margin-top: 14px; }
.rgbrow { grid-template-columns: 15px 1fr 24px 1fr 24px 1fr; margin-top: 8px; }
.hexrow label:nth-of-type(even), .rgbrow .g, .rgbrow .b { padding-left: 8px; }
.hexrow input, .rgbrow input { width: 100%; min-width: 0; height: 32px; padding: 0; border: 1px solid #d3d6df; border-radius: 6px; background: #fff; color: #383336; text-align: center; }
.hexrow .num, .rgbrow .num { padding-right: 13px; }
.rgbrow .r { color: #ff2a2a; }
.rgbrow .g { color: #3aff1a; }
.rgbrow .b { color: #2418ff; }
.palette { height: 36px; margin-top: 14px; padding-left: 8px; display: flex; align-items: center; gap: 9px; }

.options .pivot { display: flex; align-items: center; justify-content: space-between; padding-top: 17px; border: 0; }
.pivot h2 { flex: 1; }
.pivot-btns { display: flex; gap: 7px; }
.pivot-btns button { width: 38px; height: 36px; display: flex; align-items: center; justify-content: center; border: 1px solid #777; border-radius: 4px; }
```
